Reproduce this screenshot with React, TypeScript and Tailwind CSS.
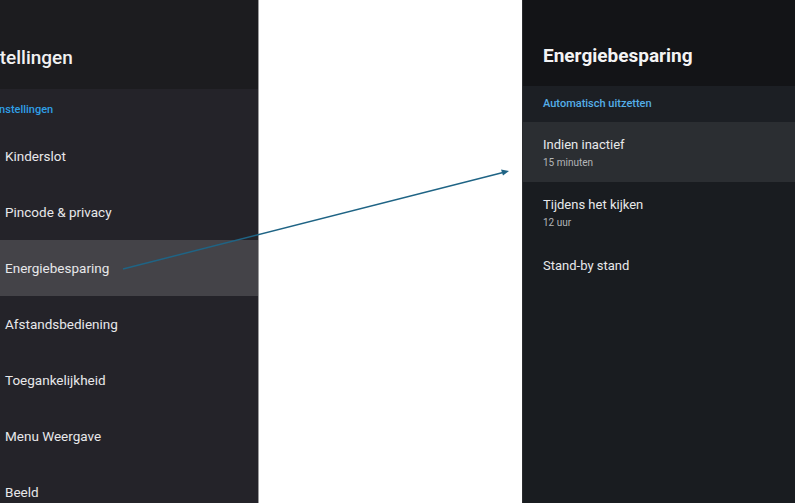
import React from "react";

const font = { fontFamily: "Roboto, 'Noto Sans', sans-serif" };

function LeftItem({ label, selected }: { label: string; selected?: boolean }) {
  return (
    <div className={`h-[56px] flex items-center pl-[5px] text-[13.5px] text-[#e8e8ea] shrink-0 ${selected ? "bg-[#444348]" : ""}`}>
      {label}
    </div>
  );
}

function RightItem({ label, sub, selected }: { label: string; sub?: string; selected?: boolean }) {
  return (
    <div className={`h-[60px] flex flex-col pt-[14px] pl-[20px] shrink-0 ${selected ? "bg-[#2b2e32]" : ""}`}>
      <div className="text-[13px] leading-[18px] text-[#e8e9eb]">{label}</div>
      {sub && <div className="text-[10px] leading-[18px] text-[#b4b6b9]">{sub}</div>}
    </div>
  );
}

export default function App() {
  return (
    <div className="relative w-[795px] h-[503px] bg-white overflow-hidden flex" style={font}>
      <div className="w-[258px] h-full flex flex-col overflow-hidden bg-[#242329]">
        <div className="h-[89px] bg-[#1c1c1f] flex items-end pb-[19px] shrink-0">
          <div className="ml-[-26px] text-[19px] font-medium text-[#f1f1f2] whitespace-nowrap leading-[24px]">Instellingen</div>
        </div>
        <div className="h-[39px] flex items-center shrink-0">
          <div className="ml-[-4px] text-[11px] font-medium text-[#2f9fe6] whitespace-nowrap mt-[4px]">Instellingen</div>
        </div>
        <LeftItem label="Kinderslot" />
        <LeftItem label="Pincode & privacy" />
        <LeftItem label="Energiebesparing" selected />
        <LeftItem label="Afstandsbediening" />
        <LeftItem label="Toegankelijkheid" />
        <LeftItem label="Menu Weergave" />
        <LeftItem label="Beeld" />
      </div>
      <div className="w-px h-full bg-[#9b9b9d]" />
      <div className="flex-1" />
      <div className="w-[273px] h-full flex flex-col bg-[#191c20] border-l border-[#2a2b2e]">
        <div className="h-[86px] bg-[#131417] flex items-end pb-[18px] pl-[20px] shrink-0">
          <div className="text-[19px] font-bold text-[#f3f3f4] leading-[24px]">Energiebesparing</div>
        </div>
        <div className="h-[36px] bg-[#1c1f24] flex items-center pl-[20px] shrink-0">
          <div className="text-[11px] font-medium text-[#55aee8]">Automatisch uitzetten</div>
        </div>
        <RightItem label="Indien inactief" sub="15 minuten" selected />
        <RightItem label="Tijdens het kijken" sub="12 uur" />
        <div className="h-[46px] flex items-center pl-[20px] pt-[2px]">
          <div className="text-[13px] text-[#e8e9eb]">Stand-by stand</div>
        </div>
      </div>
      <svg className="absolute inset-0 pointer-events-none" width="795" height="503">
        <line x1="123" y1="269" x2="503" y2="172.5" stroke="#1f6485" strokeWidth="1.5" />
        <polygon points="509,171 501,169.5 503,175.5" fill="#1f6485" />
      </svg>
    </div>
  );
}
